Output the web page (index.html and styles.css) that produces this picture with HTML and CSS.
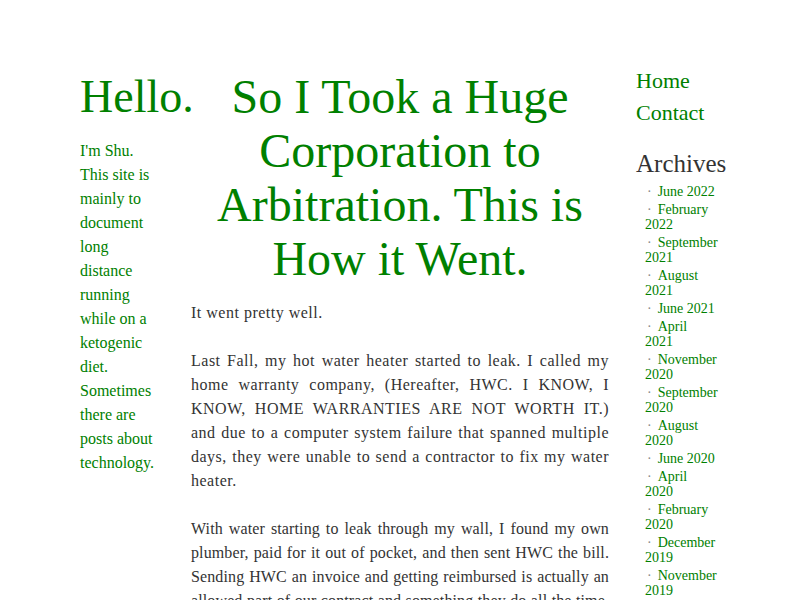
FILE: index.html
```
<!DOCTYPE html>
<html>
<head>
<meta charset="utf-8">
<link rel="stylesheet" href="styles.css">
</head>
<body>
<div class="page">
  <aside class="left">
    <div class="hello">Hello.</div>
    <p class="bio">I'm Shu. This site is mainly to document long distance running while on a ketogenic diet. Sometimes there are posts about technology.</p>
  </aside>
  <main class="main">
    <h1 class="title">So I Took a Huge Corporation to Arbitration. This is How it Went.</h1>
    <p>It went pretty well.</p>
    <p>Last Fall, my hot water heater started to leak. I called my home warranty company, (Hereafter, HWC. I KNOW, I KNOW, HOME WARRANTIES ARE NOT WORTH IT.) and due to a computer system failure that spanned multiple days, they were unable to send a contractor to fix my water heater.</p>
    <p class="snug">With water starting to leak through my wall, I found my own plumber, paid for it out of pocket, and then sent HWC the bill. Sending HWC an invoice and getting reimbursed is actually an allowed part of our contract and something they do all the time. Our</p>
  </main>
  <nav class="right">
    <a class="navlink" href="#">Home</a>
    <a class="navlink" href="#">Contact</a>
    <h2 class="arch-title">Archives</h2>
    <ul class="archives">
      <li><a href="#">June 2022</a></li>
      <li><a href="#">February 2022</a></li>
      <li><a href="#">September 2021</a></li>
      <li><a href="#">August 2021</a></li>
      <li><a href="#">June 2021</a></li>
      <li><a href="#">April 2021</a></li>
      <li><a href="#">November 2020</a></li>
      <li><a href="#">September 2020</a></li>
      <li><a href="#">August 2020</a></li>
      <li><a href="#">June 2020</a></li>
      <li><a href="#">April 2020</a></li>
      <li><a href="#">February 2020</a></li>
      <li><a href="#">December 2019</a></li>
      <li><a href="#">November 2019</a></li>
      <li><a href="#">October 2019</a></li>
    </ul>
  </nav>
</div>
</body>
</html>
```
FILE: styles.css
```
html, body {
  margin: 0;
  padding: 0;
  background: #fff;
  overflow: hidden;
  height: 600px;
}
body {
  font-family: "Liberation Serif", "Times New Roman", serif;
  color: #333;
}
.page {
  display: flex;
  align-items: flex-start;
  padding: 70px 0 0 80px;
}
.left {
  width: 80px;
  flex: none;
  margin-right: 31px;
}
.hello {
  font-size: 46px;
  line-height: 54px;
  color: #008000;
  white-space: nowrap;
}
.bio {
  margin: 15px 0 0;
  font-size: 16px;
  line-height: 24px;
  color: #008000;
}
.main {
  width: 418px;
  flex: none;
  margin-right: 27px;
}
.title {
  margin: 0 0 15px;
  font-size: 48px;
  line-height: 54px;
  font-weight: normal;
  color: #008000;
  text-align: center;
}
.main p {
  margin: 0 0 24px;
  font-size: 16px;
  line-height: 24px;
  text-align: justify;
  letter-spacing: 0.5px;
}
.main p.snug {
  letter-spacing: 0.12px;
}
.right {
  width: 82px;
  flex: none;
  display: flex;
  flex-direction: column;
  align-items: flex-start;
  margin-top: -5px;
}
.navlink {
  color: #008000;
  text-decoration: none;
  font-size: 22px;
  line-height: 32px;
}
.arch-title {
  margin: 19px 0 4px;
  font-size: 25px;
  line-height: 32px;
  font-weight: normal;
  color: #333;
  white-space: nowrap;
}
.archives {
  list-style: none;
  margin: 0;
  padding: 0 0 0 9px;
}
.archives li {
  font-size: 14px;
  line-height: 15px;
  margin-bottom: 3px;
}
.archives li::before {
  content: "·";
  color: #888;
  margin: 0 6px 0 2px;
}
.archives a {
  color: #008000;
  text-decoration: none;
}
```
